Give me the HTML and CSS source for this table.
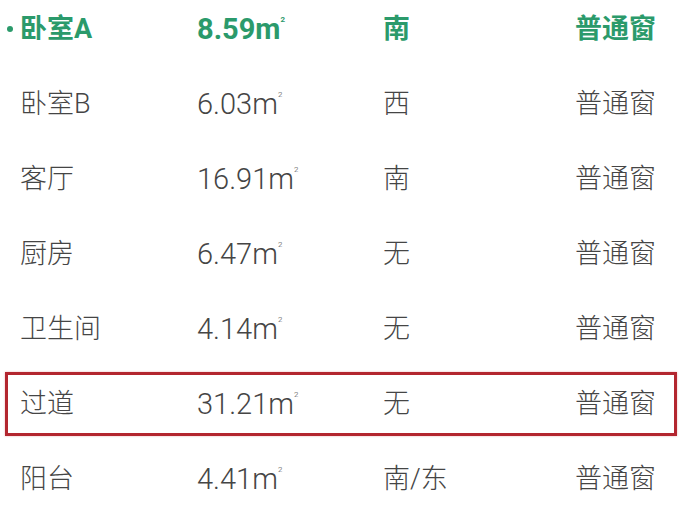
FILE: index.html
```html
<!DOCTYPE html>
<html lang="zh">
<head>
<meta charset="utf-8">
<link rel="stylesheet" href="styles.css">
</head>
<body>
<div class="list">
  <div class="row active"><span class="name">卧室A</span><span class="area">8.59m<sup>2</sup></span><span class="dir">南</span><span class="win">普通窗</span></div>
  <div class="row"><span class="name">卧室B</span><span class="area">6.03m<sup>2</sup></span><span class="dir">西</span><span class="win">普通窗</span></div>
  <div class="row"><span class="name">客厅</span><span class="area">16.91m<sup>2</sup></span><span class="dir">南</span><span class="win">普通窗</span></div>
  <div class="row"><span class="name">厨房</span><span class="area">6.47m<sup>2</sup></span><span class="dir">无</span><span class="win">普通窗</span></div>
  <div class="row"><span class="name">卫生间</span><span class="area">4.14m<sup>2</sup></span><span class="dir">无</span><span class="win">普通窗</span></div>
  <div class="row marked"><span class="name">过道</span><span class="area">31.21m<sup>2</sup></span><span class="dir">无</span><span class="win">普通窗</span></div>
  <div class="row"><span class="name">阳台</span><span class="area">4.41m<sup>2</sup></span><span class="dir">南/东</span><span class="win">普通窗</span></div>
</div>
</body>
</html>
```
FILE: styles.css
```css
html, body {
  margin: 0;
  padding: 0;
  background: #ffffff;
  overflow: hidden;
}
body {
  width: 679px;
  height: 518px;
  font-family: Roboto, "Noto Sans CJK SC", sans-serif;
  color: #454545;
}
.list {
  display: flex;
  flex-direction: column;
  gap: 11px;
  margin-top: -3px;
  padding: 0 2px 0 5px;
}
.row {
  position: relative;
  display: grid;
  grid-template-columns: 176px 187px 192px 1fr;
  align-items: center;
  height: 64px;
  box-sizing: border-box;
  border: 3px solid transparent;
  padding-left: 12px;
  font-size: 27px;
  line-height: 40px;
  font-weight: 300;
}
.area {
  font-size: 29px;
  padding-left: 1px;
}
.row sup {
  font-size: 8px;
  line-height: 0;
  vertical-align: 17px;
  margin-left: 0;
}
.active {
  color: #2b9a6b;
  font-weight: 700;
}
.active::before {
  content: "";
  position: absolute;
  left: -1px;
  top: 26px;
  width: 6px;
  height: 6px;
  border-radius: 50%;
  background: #2b9a6b;
}
.marked {
  border-color: #b3262f;
  box-shadow: 0 0 2px rgba(200, 40, 50, 0.35);
}
```
